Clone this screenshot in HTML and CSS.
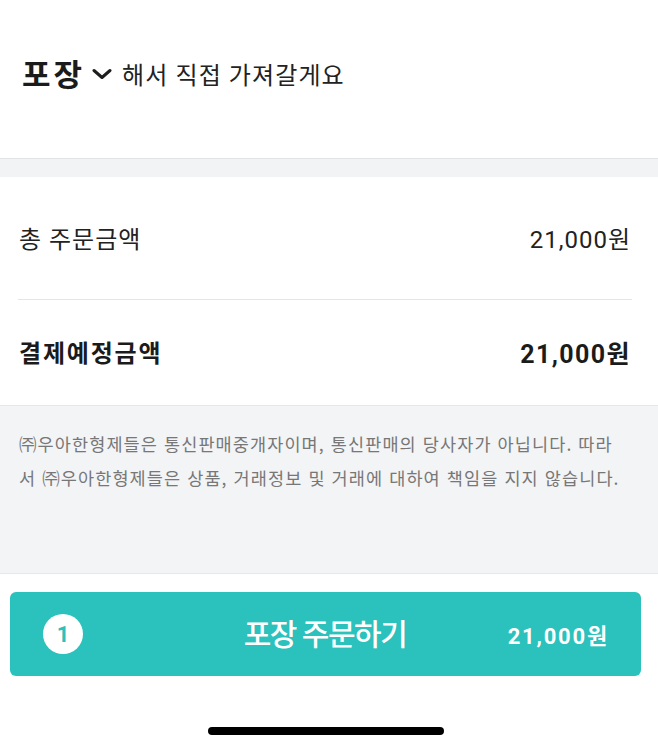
FILE: index.html
```html
<!DOCTYPE html>
<html lang="ko">
<head>
<meta charset="utf-8">
<link rel="stylesheet" href="styles.css">
</head>
<body>
<div class="page">
  <header class="header">
    <span class="mode">포장</span>
    <svg class="chev" width="20" height="12" viewBox="0 0 20 12"><path d="M2 2.5 L10 9.5 L18 2.5" fill="none" stroke="#1e1e1e" stroke-width="3" stroke-linecap="round" stroke-linejoin="round"/></svg>
    <span class="sub">해서 직접 가져갈게요</span>
  </header>
  <div class="band"></div>
  <section class="summary">
    <div class="row row-total">
      <span class="key">총 주문금액</span>
      <span class="val">21,000원</span>
    </div>
    <div class="divider"></div>
    <div class="row row-pay">
      <span class="key">결제예정금액</span>
      <span class="val">21,000원</span>
    </div>
  </section>
  <section class="notice">
    <p>㈜우아한형제들은 통신판매중개자이며, 통신판매의 당사자가 아닙니다. 따라서 ㈜우아한형제들은 상품, 거래정보 및 거래에 대하여 책임을 지지 않습니다.</p>
  </section>
  <div class="footer">
    <button class="order">
      <span class="count">1</span>
      <span class="label">포장 주문하기</span>
      <span class="price">21,000원</span>
    </button>
    <div class="home"></div>
  </div>
</div>
</body>
</html>
```
FILE: styles.css
```css
* { box-sizing: border-box; }
html, body { margin: 0; padding: 0; background: #fff; }
body {
  font-family: "Roboto", "Noto Sans CJK KR", "Noto Sans", sans-serif;
  color: #1c1c1c;
}
.page { width: 658px; height: 749px; overflow: hidden; display: flex; flex-direction: column; }

.header {
  height: 158px;
  display: flex;
  align-items: center;
  padding: 0 0 14px 22px;
}
.mode { font-size: 31px; font-weight: 700; letter-spacing: 3px; color: #1b1b1b; }
.chev { margin: 4px 10px 0 7px; }
.sub { font-size: 24px; font-weight: 400; color: #222; letter-spacing: 1.1px; margin-top: 2px; }

.band {
  height: 19px;
  background: #f2f3f5;
  border-top: 1px solid #e2e3e5;
}

.summary { height: 228px; display: flex; flex-direction: column; }
.row {
  display: flex;
  justify-content: space-between;
  align-items: center;
  padding: 0 28px 0 19px;
  font-size: 24px;
}
.row-total { height: 122px; font-weight: 400; color: #222; padding-bottom: 2px; }
.row-pay { height: 105px; font-weight: 700; color: #1b1b1b; padding-bottom: 2px; }
.key { letter-spacing: 1px; }
.val { letter-spacing: 1px; margin-right: -1px; }
.row-pay .key { letter-spacing: 1.8px; }
.row-pay .val { font-size: 25px; letter-spacing: 1.4px; }
.divider { height: 1px; background: #e4e5e7; margin: 0 26px 0 18px; }

.notice {
  height: 169px;
  background: #f3f4f6;
  border-top: 1px solid #e6e7e9;
  border-bottom: 1px solid #e6e7e9;
  padding: 21px 30px 0 19px;
}
.notice p {
  margin: 0;
  font-family: "Noto Sans CJK KR", sans-serif;
  font-size: 17.5px;
  line-height: 34px;
  color: #777;
  word-break: break-all;
  letter-spacing: 1.1px;
}

.footer { flex: 1; display: flex; flex-direction: column; padding-top: 18px; }
.order {
  margin: 0 17px 0 10px;
  height: 84px;
  border: none;
  border-radius: 6px;
  background: #2bc1bc;
  color: #fff;
  font-family: inherit;
  display: grid;
  grid-template-columns: 1fr auto 1fr;
  align-items: center;
  padding: 0 34px 0 33px;
}
.count {
  justify-self: start;
  width: 40px;
  height: 40px;
  border-radius: 50%;
  background: #fff;
  color: #2bc1bc;
  font-size: 22px;
  font-weight: 700;
  display: flex;
  align-items: center;
  justify-content: center;
}
.label { font-size: 30px; font-weight: 500; letter-spacing: -1.5px; margin-top: -4px; }
.price { justify-self: end; font-size: 22px; font-weight: 700; letter-spacing: 1.8px; margin-right: -2px; }

.home {
  width: 236px;
  height: 8px;
  border-radius: 4px;
  background: #000;
  margin: 51px 0 0 208px;
}
```
